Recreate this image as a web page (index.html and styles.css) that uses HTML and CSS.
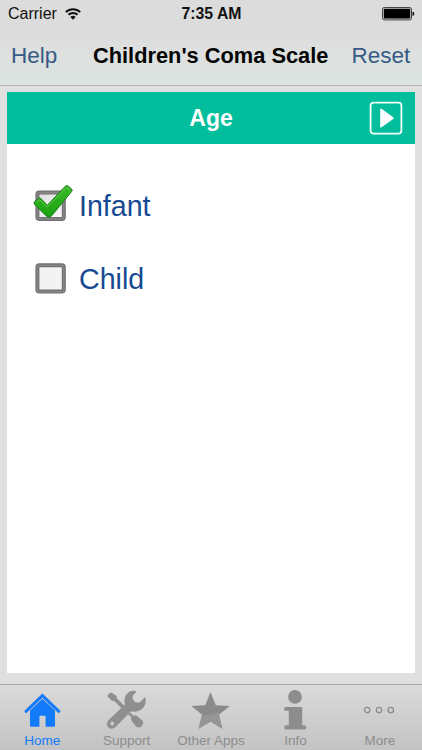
FILE: index.html
```html
<!DOCTYPE html>
<html lang="en">
<head>
    <meta charset="UTF-8">
    <meta name="viewport" content="width=device-width, initial-scale=1.0">
    <title>Children's Coma Scale</title>
    <link rel="stylesheet" href="styles.css">
</head>
<body>
    <header class="top">
        <div class="status-bar">
            <div class="carrier">
                <span>Carrier</span>
                <svg class="wifi" width="16" height="12" viewBox="0 0 16 12">
                    <path d="M.8 4.1a10.400 10.400 0 0 1 14.4 0M3.4 6.800a6.600 6.600 0 0 1 9.2 0" fill="none" stroke="#111" stroke-width="2"/>
                    <path d="M8 11.700L5.300 9.100a3.900 3.900 0 0 1 5.4 0z" fill="#111"/>
                </svg>
            </div>
            <div class="time">7:35 AM</div>
            <svg class="battery" width="33" height="14" viewBox="0 0 33 14">
                <rect x="0.5" y="0.5" width="29" height="12.4" rx="1.8" fill="#ccc" stroke="#444"/>
                <rect x="1.8" y="1.8" width="26.4" height="9.8" rx="0.8" fill="#000"/>
                <path d="M30.5 4.7h.6q1.2 0 1.2 2t-1.2 2h-.6z" fill="#111"/>
            </svg>
        </div>
        <nav class="nav-bar">
            <a class="nav-link">Help</a>
            <h1 class="nav-title">Children's Coma Scale</h1>
            <a class="nav-link nav-right">Reset</a>
        </nav>
    </header>

    <main class="content">
        <div class="card">
            <div class="card-header">
                <h2 class="card-title">Age</h2>
                <svg class="next" width="34" height="34" viewBox="0 0 34 34">
                    <rect x="1.6" y="1.6" width="30.8" height="31" rx="2.8" fill="none" stroke="#f4fffc" stroke-width="1.8"/>
                    <path d="M11.200 8.500v17q0 1.600 1.400.8l11.600-8.400q.9-.8 0-1.600L12.600 7.700q-1.400-.8-1.400.8z" fill="#fff"/>
                </svg>
            </div>

            <div class="options">
                <div class="option">
                    <svg class="check" width="40" height="40" viewBox="0 0 40 40">
                        <rect x="3.4" y="6.6" width="26.4" height="26.4" rx="2" fill="url(#boxFill)" stroke="#707070" stroke-width="4"/>
                        <rect x="3.4" y="6.6" width="26.4" height="26.4" rx="1.6" fill="none" stroke="#868686" stroke-width="1.6"/>
                        <path d="M.4 18.200Q-.6 16.500.9 15.300l3.400-2.700q1.600-1.200 3 .3l5.900 6.500L31.200.3q1.400-1.400 2.900-.2l3.400 2.800q1.300 1.200.1 2.700L17.500 29.900q-2.700 2.500-5.200 0z" fill="url(#tickFill)" stroke="#1c7d16" stroke-width="1"/>
                        <path d="M1.800 16.700l3.900-3 7.500 7.400L32.700 1.300l3.500 2.700" fill="none" stroke="#6fd454" stroke-width="1" opacity=".7"/>
                        <defs>
                            <linearGradient id="boxFill" x1="0" y1="0" x2="1" y2="1">
                                <stop offset="0" stop-color="#dcdcdc"/>
                                <stop offset="1" stop-color="#fbfbfb"/>
                            </linearGradient>
                            <linearGradient id="tickFill" x1="0" y1="0" x2="0" y2="1">
                                <stop offset="0" stop-color="#3cbb2a"/>
                                <stop offset="1" stop-color="#18a00e"/>
                            </linearGradient>
                        </defs>
                    </svg>
                    <span>Infant</span>
                </div>
                <div class="option">
                    <svg class="check" width="40" height="40" viewBox="0 0 40 40">
                        <rect x="3.4" y="6.2" width="26.4" height="26.4" rx="2" fill="#f3f3f3" stroke="#707070" stroke-width="4"/>
                        <rect x="3.4" y="6.2" width="26.4" height="26.4" rx="1.6" fill="none" stroke="#868686" stroke-width="1.6"/>
                    </svg>
                    <span>Child</span>
                </div>
            </div>
        </div>
    </main>

    <footer class="tab-bar">
        <a class="tab active">
            <svg width="40" height="40" viewBox="0 0 40 40">
                <path d="M4 21.300L20.400 5.600 36.800 21.300" fill="none" stroke="#137bfa" stroke-width="3" stroke-linecap="round"/>
                <path d="M8 20.400L20.400 8.800 33 20.400V35.400q0 1.400-1.400 1.400H23.600V26.800q0-1-1-1h-4.200q-1 0-1 1v10H9.400Q8 36.800 8 35.400z" fill="#137bfa"/>
            </svg>
            <span>Home</span>
        </a>
        <a class="tab">
            <svg width="40" height="40" viewBox="0 0 40 40">
                <path d="M.6 6.500Q.2 5.500 1 4.700L3 2.900q1-.6 2 0l4.200 2.800q.8.600.7 1.600l-.1 1 8 8-2.600 2.600-8-8-1.400.1q-1 0-1.500-.8z" fill="#8f8f8f"/>
                <path d="M24.400 26.800q-1.200 2 .2 3.900l4 5.200q3 3.200 6 .4 3-3 .5-6l-5.100-4.400q-2-1.300-3.800-.2l-3-3.200-2.200 2z" fill="#8f8f8f"/>
                <path fill-rule="evenodd" d="M28.500 1Q22 -.3 18.400 6q-1.900 4.600-.4 8.400L1.400 30.200q-3 4-.2 7 3.600 3.200 7.600-.4L24 21.300q6.100 1.700 11-2.200 4.700-4.500 3.600-10.800-.5-1.400-1.500-.4l-4 4q-3.600 1.500-6.100-1-2.200-2.500-.8-6l2.800-2.500Q29.700 1.200 28.500 1zM5.200 31.600a1.900 1.900 0 1 0 .1 0z" fill="#8f8f8f"/>
            </svg>
            <span>Support</span>
        </a>
        <a class="tab">
            <svg width="40" height="40" viewBox="0 0 40 40">
                <path d="M19.500 2l5.300 13.200 14 .8-10.800 8.800 3.300 14-11.800-7.300-12 7.300 3.600-14L.3 16l14-.8z" fill="#8a8a8a"/>
                <path d="M28.500 22l-.5 2.800 3.300 14-11.800-7.300-12 7.300 3.300-13.500Q21.500 25.100 28.500 22z" fill="#959595"/>
            </svg>
            <span>Other Apps</span>
        </a>
        <a class="tab">
            <svg width="40" height="40" viewBox="0 0 40 40">
                <circle cx="20" cy="6.900" r="6.900" fill="#8d8d8d"/>
                <path d="M10.800 17h15.400q1 0 1 1v17.200h2q2 0 2 2.200t-2 2.200H11.200q-2 0-2-2.200t2-2.200h2.600V20.800h-3q-1.800 0-1.800-1.900t1.800-1.900z" fill="#8d8d8d"/>
            </svg>
            <span>Info</span>
        </a>
        <a class="tab">
            <svg width="40" height="40" viewBox="0 0 40 40">
                <g fill="none" stroke="#8c8c8c" stroke-width="1.300">
                    <circle cx="7.200" cy="20" r="2.700"/>
                    <circle cx="19" cy="20" r="2.700"/>
                    <circle cx="30.800" cy="20" r="2.700"/>
                </g>
            </svg>
            <span>More</span>
        </a>
    </footer>
</body>
</html>
```

FILE: styles.css
```css
* {
    box-sizing: border-box;
}

body {
    display: flex;
    flex-direction: column;
    height: 750px;
    margin: 0;
    overflow: hidden;
    background-color: #e0e0e0;
    font-family: "Liberation Sans", Arial, sans-serif;
}

h1, h2 {
    margin: 0;
}

svg {
    display: block;
    flex: none;
    overflow: visible;
}

/* Status and navigation bars */
.top {
    height: 86px;
    background: linear-gradient(#dcdcdc 0, #dcdcdc 35px, #dee0df 50px, #dae4e2 84px);
    border-bottom: 1px solid #b5b5b7;
}

.status-bar {
    display: grid;
    grid-template-columns: 1fr auto 1fr;
    align-items: center;
    height: 28px;
    padding: 0 7px 0 8px;
    font-size: 16px;
    color: #111;
}

.carrier {
    display: flex;
    align-items: center;
    gap: 8px;
}

.time {
    font-size: 15.8px;
    font-weight: bold;
}

.battery {
    justify-self: end;
}

.nav-bar {
    display: grid;
    grid-template-columns: 82px 1fr 82px;
    align-items: center;
    height: 56px;
    padding: 0 12px 0 11px;
}

.nav-link {
    font-size: 22.5px;
    color: #365a84;
}

.nav-right {
    text-align: right;
}

.nav-title {
    font-size: 21.8px;
    text-align: center;
    white-space: nowrap;
    color: #050505;
}

/* Question card */
.content {
    flex: 1;
    padding: 6px 7px 11px;
}

.card {
    height: 100%;
    background-color: #fff;
}

.card-header {
    display: grid;
    grid-template-columns: 1fr auto 1fr;
    align-items: center;
    height: 52px;
    padding: 0 12px;
    background-color: #02be9c;
}

.card-title {
    grid-column: 2;
    font-size: 23px;
    color: #fff;
}

.next {
    justify-self: end;
}

.options {
    display: flex;
    flex-direction: column;
    gap: 33px;
    padding: 42px 27px;
}

.option {
    display: flex;
    align-items: center;
    gap: 5px;
    height: 40px;
    font-size: 28.6px;
    color: #174a91;
}

/* Bottom tabs */
.tab-bar {
    display: grid;
    grid-template-columns: repeat(5, 1fr);
    height: 66px;
    border-top: 1px solid #ababab;
    background: linear-gradient(#dadada, #c3c3c3);
}

.tab {
    display: flex;
    flex-direction: column;
    align-items: center;
    gap: 3px;
    padding-top: 5px;
    font-size: 13.5px;
    line-height: 16px;
    color: #8d8d8d;
}

.tab.active {
    color: #137bfa;
}
```
